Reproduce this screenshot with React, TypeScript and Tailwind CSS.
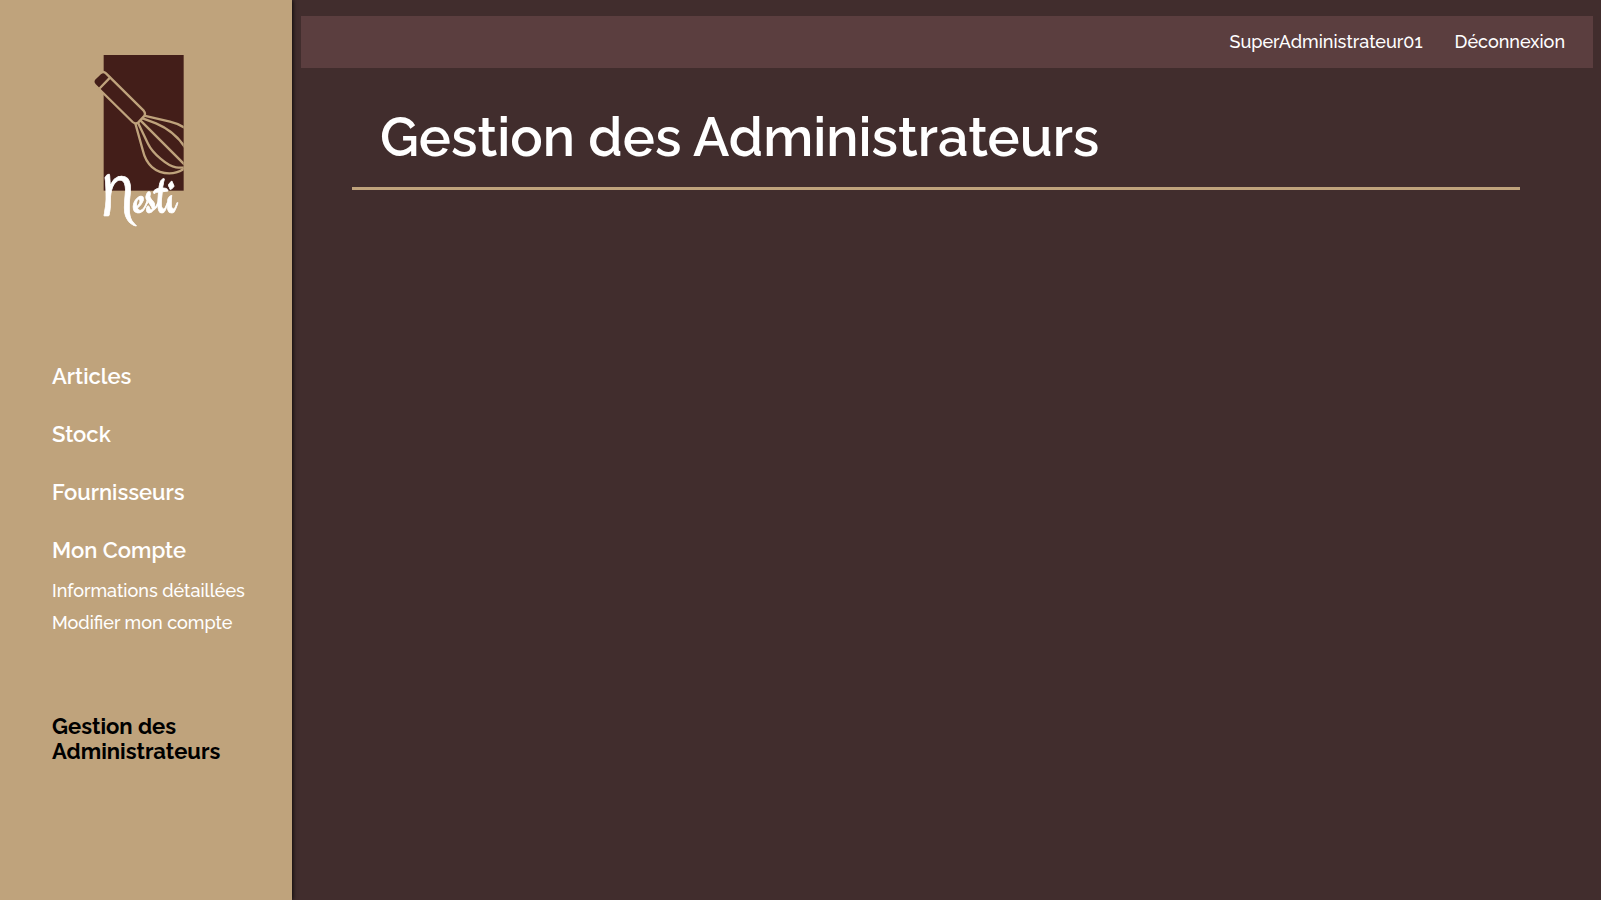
const mainLinks = ["Articles", "Stock", "Fournisseurs", "Mon Compte"];
const accountLinks = ["Informations détaillées", "Modifier mon compte"];

function Logo() {
  return (
    <svg viewBox="0 0 360 600" className="block h-[200px] w-[120px]" role="img" aria-label="Nesti">
      <defs>
        <clipPath id="panel">
          <rect x="0" y="45" width="311" height="408" />
        </clipPath>
      </defs>
      <rect x="71" y="45" width="240" height="407" fill="#431e19" />
      <g clipPath="url(#panel)" stroke="#bfa37c" strokeWidth="7" fill="none" strokeLinecap="round" strokeLinejoin="round">
        <path d="M192 227L270 245Q296 251 316 265" />
        <path d="M188 235L228 250C266 266 294 288 316 324" />
        <path d="M182 242L318 378" />
        <path d="M174 248L204 311C218 340 262 378 288 382Q302 384 316 382" />
        <path d="M166 250L189 333C198 372 226 400 268 400Q292 400 316 384" />
        <path
          d="M43 117L62 99Q70 92 78 100L191 212Q199 222 191 230L175 247Q167 254 158 246L45 135Q36 126 43 117Z"
          fill="#431e19"
        />
        <path d="M90 113L60 144" />
      </g>
      <text x="65" y="520" fill="#fff" stroke="#fff" strokeWidth="2" fontSize="161" fontFamily="Engagement, cursive">
        Nesti
      </text>
    </svg>
  );
}

export default function App() {
  return (
    <div className="flex min-h-screen bg-[#412d2d] font-['Raleway','Lato',sans-serif] text-white">
      <aside className="z-10 w-[292px] shrink-0 bg-[#bfa37c] shadow-[1px_0_4px_#000c]">
        <a href="#accueil" className="mt-10 ml-20 block w-[120px]">
          <Logo />
        </a>
        <nav className="mt-[121px] px-[52px]">
          <ul className="flex flex-col gap-7 text-[22px] leading-[30px] font-semibold">
            {mainLinks.map((label) => (
              <li key={label}>
                <a href="#menu">{label}</a>
              </li>
            ))}
          </ul>
          <ul className="mt-2.5 text-lg leading-8 font-medium whitespace-nowrap">
            {accountLinks.map((label) => (
              <li key={label}>
                <a href="#compte">{label}</a>
              </li>
            ))}
          </ul>
          <a href="#administrateurs" aria-current="page" className="mt-[75px] block text-[22px] leading-[25px] font-bold text-black">
            Gestion des Administrateurs
          </a>
        </nav>
      </aside>
      <main className="min-w-0 flex-1 pt-4 pr-2 pl-[9px]">
        <header className="flex h-[52px] items-center justify-end gap-8 bg-[#5b3e3f] px-7 text-lg font-medium">
          <a href="#profil">SuperAdministrateur01</a>
          <a href="#deconnexion">Déconnexion</a>
        </header>
        <section className="mr-[73px] ml-[51px]">
          <h1 className="border-b-[3px] border-[#bfa37c] pt-[37px] pb-[18px] pl-7 text-[54px] leading-[64px] font-semibold">
            Gestion des Administrateurs
          </h1>
        </section>
      </main>
    </div>
  );
}
